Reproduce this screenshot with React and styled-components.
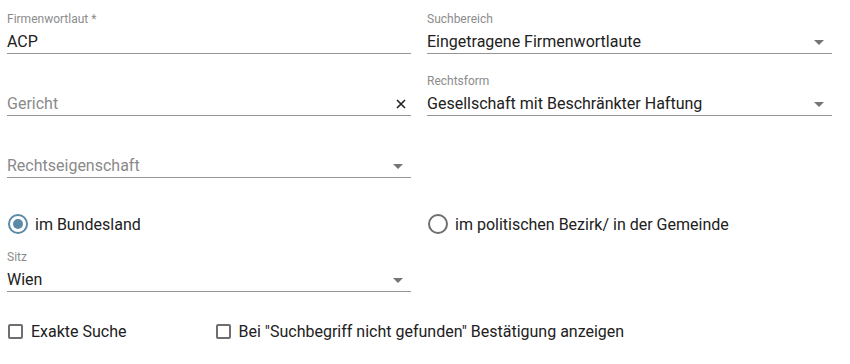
import React, { useState } from 'react';
import styled, { createGlobalStyle } from 'styled-components';

const GlobalStyle = createGlobalStyle`
  body {
    margin: 0;
    background: #fff;
    font-family: Roboto, "Liberation Sans", sans-serif;
    color: #212121;
  }
`;

const Form = styled.form`
  padding: 12px 18px 0 7px;
  width: 825px;
  box-sizing: border-box;
`;

const Grid = styled.div`
  display: grid;
  grid-template-columns: 404px 405px;
  column-gap: 16px;
  row-gap: 20px;
`;

const Field = styled.div`
  display: flex;
  flex-direction: column;
`;

const Label = styled.label`
  font-size: 12px;
  line-height: 14px;
  height: 14px;
  color: #8c8c8c;
  margin-bottom: 5px;
`;

const InputRow = styled.div`
  display: flex;
  align-items: center;
  height: 22px;
  border-bottom: 1px solid #949494;
`;

const Value = styled.span`
  flex: 1;
  font-size: 16px;
  line-height: 20px;
  color: ${(p) => (p.$placeholder ? '#8a8a8a' : '#212121')};
  white-space: nowrap;
`;

const Arrow = styled.span`
  width: 0;
  height: 0;
  margin-right: 8px;
  border-left: 5px solid transparent;
  border-right: 5px solid transparent;
  border-top: 5px solid #757575;
`;

const Clear = styled.span`
  display: flex;
  margin-right: 5px;
  color: #212121;
`;

const RadioRow = styled.div`
  display: grid;
  grid-template-columns: 420px 1fr;
  margin-top: 34px;
  height: 24px;
`;

const RadioItem = styled.label`
  display: flex;
  align-items: center;
  gap: 7px;
  font-size: 16px;
  color: #212121;
  cursor: pointer;
`;

const RadioCircle = styled.span`
  position: relative;
  width: 16px;
  height: 16px;
  margin-left: 1px;
  border-radius: 50%;
  border: 2px solid ${(p) => (p.$checked ? '#5b8aa6' : '#6e6e6e')};
  &::after {
    content: '';
    position: absolute;
    top: 3px;
    left: 3px;
    width: 10px;
    height: 10px;
    border-radius: 50%;
    background: #5b8aa6;
    display: ${(p) => (p.$checked ? 'block' : 'none')};
  }
`;

const SitzField = styled(Field)`
  width: 404px;
  margin-top: 14px;
`;

const CheckRow = styled.div`
  display: flex;
  margin-top: 30px;
  gap: 88px;
`;

const CheckItem = styled.label`
  display: flex;
  align-items: center;
  gap: 8px;
  font-size: 16px;
  color: #212121;
  cursor: pointer;
`;

const CheckBox = styled.span`
  width: 11px;
  height: 11px;
  margin-left: 1px;
  border: 2px solid #6e6e6e;
  border-radius: 2px;
  background: ${(p) => (p.$checked ? '#5b8aa6' : 'transparent')};
`;

const Select = ({ label, value, placeholder, clearable }) => (
  <Field>
    {label ? <Label>{label}</Label> : <Label as="span" />}
    <InputRow>
      <Value $placeholder={!value}>{value || placeholder}</Value>
      {clearable ? (
        <Clear>
          <svg width="10" height="10" viewBox="0 0 10 10">
            <path d="M1 1 L9 9 M9 1 L1 9" stroke="#212121" strokeWidth="1.6" />
          </svg>
        </Clear>
      ) : (
        <Arrow />
      )}
    </InputRow>
  </Field>
);

const TextField = ({ label, value }) => (
  <Field>
    <Label>{label}</Label>
    <InputRow>
      <Value>{value}</Value>
    </InputRow>
  </Field>
);

const App = () => {
  const [region, setRegion] = useState('land');
  const [exact, setExact] = useState(false);
  const [confirm, setConfirm] = useState(false);

  return (
    <>
      <GlobalStyle />
      <Form onSubmit={(e) => e.preventDefault()}>
        <Grid>
          <TextField label="Firmenwortlaut *" value="ACP" />
          <Select label="Suchbereich" value="Eingetragene Firmenwortlaute" />
          <Select placeholder="Gericht" clearable />
          <Select label="Rechtsform" value="Gesellschaft mit Beschränkter Haftung" />
          <Select placeholder="Rechtseigenschaft" />
          <div />
        </Grid>

        <RadioRow>
          <RadioItem onClick={() => setRegion('land')}>
            <RadioCircle $checked={region === 'land'} />
            im Bundesland
          </RadioItem>
          <RadioItem onClick={() => setRegion('bezirk')}>
            <RadioCircle $checked={region === 'bezirk'} />
            im politischen Bezirk/ in der Gemeinde
          </RadioItem>
        </RadioRow>

        <SitzField>
          <Label>Sitz</Label>
          <InputRow>
            <Value>Wien</Value>
            <Arrow />
          </InputRow>
        </SitzField>

        <CheckRow>
          <CheckItem onClick={() => setExact(!exact)}>
            <CheckBox $checked={exact} />
            Exakte Suche
          </CheckItem>
          <CheckItem onClick={() => setConfirm(!confirm)}>
            <CheckBox $checked={confirm} />
            Bei "Suchbegriff nicht gefunden" Bestätigung anzeigen
          </CheckItem>
        </CheckRow>
      </Form>
    </>
  );
};

export default App;
